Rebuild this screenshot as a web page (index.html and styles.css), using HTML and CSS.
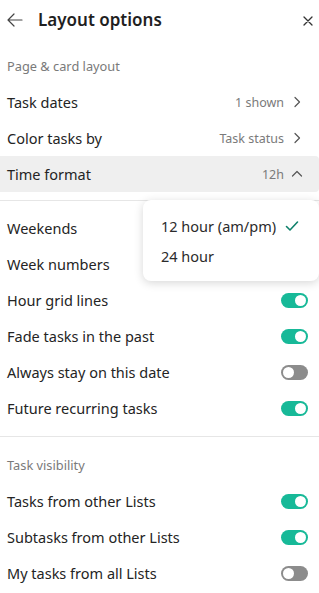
FILE: index.html
```html
<!DOCTYPE html>
<html lang="en">
<head>
<meta charset="utf-8">
<title>Layout options</title>
<link rel="stylesheet" href="styles.css">
</head>
<body>
<div class="panel">
  <header class="header">
    <svg class="back" width="16" height="14" viewBox="0 0 16 14"><path d="M15 7H1.5M7 1 1 7l6 6" fill="none" stroke="#444" stroke-width="1.2" stroke-linecap="round" stroke-linejoin="round"/></svg>
    <h1 class="title">Layout options</h1>
    <svg class="close" width="10" height="10" viewBox="0 0 10 10"><path d="M1 1l8 8M9 1 1 9" fill="none" stroke="#333" stroke-width="1.3" stroke-linecap="round"/></svg>
  </header>

  <div class="label first">Page &amp; card layout</div>
  <div class="row"><span class="name">Task dates</span><span class="value">1 shown</span><svg class="chev" width="12" height="12" viewBox="0 0 12 12"><path d="M4 1.5 8.5 6 4 10.5" fill="none" stroke="#555" stroke-width="1.2" stroke-linecap="round" stroke-linejoin="round"/></svg></div>
  <div class="row"><span class="name">Color tasks by</span><span class="value">Task status</span><svg class="chev" width="12" height="12" viewBox="0 0 12 12"><path d="M4 1.5 8.5 6 4 10.5" fill="none" stroke="#555" stroke-width="1.2" stroke-linecap="round" stroke-linejoin="round"/></svg></div>
  <div class="row active"><span class="name">Time format</span><span class="value">12h</span><svg class="chev" width="12" height="12" viewBox="0 0 12 12"><path d="M1.5 8 6 3.5 10.5 8" fill="none" stroke="#555" stroke-width="1.2" stroke-linecap="round" stroke-linejoin="round"/></svg></div>

  <div class="divider top"></div>

  <div class="row"><span class="name">Weekends</span></div>
  <div class="row"><span class="name">Week numbers</span></div>
  <div class="row"><span class="name">Hour grid lines</span><span class="toggle on"></span></div>
  <div class="row"><span class="name">Fade tasks in the past</span><span class="toggle on"></span></div>
  <div class="row"><span class="name">Always stay on this date</span><span class="toggle"></span></div>
  <div class="row"><span class="name">Future recurring tasks</span><span class="toggle on"></span></div>

  <div class="divider mid"></div>

  <div class="label second">Task visibility</div>
  <div class="row"><span class="name">Tasks from other Lists</span><span class="toggle on"></span></div>
  <div class="row"><span class="name">Subtasks from other Lists</span><span class="toggle on"></span></div>
  <div class="row"><span class="name">My tasks from all Lists</span><span class="toggle"></span></div>

  <div class="menu">
    <div class="item"><span>12 hour (am/pm)</span><svg class="check" width="14" height="12" viewBox="0 0 14 12"><path d="M1.5 6.5 5 10l7.5-8" fill="none" stroke="#0e806b" stroke-width="1.6" stroke-linecap="round" stroke-linejoin="round"/></svg></div>
    <div class="item"><span>24 hour</span></div>
  </div>
</div>
</body>
</html>
```

FILE: styles.css
```css
* { box-sizing: border-box; }
html, body { margin: 0; padding: 0; background: #fff; }
body {
  font-family: "Noto Sans", "Open Sans", sans-serif;
  color: #242424;
  width: 319px;
  overflow: hidden;
}
.panel { position: relative; width: 319px; }
.header {
  display: flex;
  align-items: center;
  height: 40px;
  padding: 0 0 0 7px;
}
.back { flex: none; }
.title {
  margin: 0 0 0 15px;
  font-size: 17px;
  font-weight: 600;
  color: #1f1f1f;
  flex: 1;
  line-height: 20px;
}
.close { flex: none; margin-right: 6px; margin-top: 1px; }
.label {
  padding-left: 7px;
  font-size: 12.8px;
  line-height: 16px;
  color: #7a7a7a;
}
.label.first { padding-top: 18px; padding-bottom: 10px; }
.label.second { padding-top: 20px; padding-bottom: 10px; }
.row {
  display: flex;
  align-items: center;
  height: 36px;
  padding: 0 11px 0 7px;
  font-size: 14.5px;
}
.row.active { background: #efefef; border-radius: 0 4px 4px 0; }
.name { flex: 1; white-space: nowrap; }
.value { font-size: 12.5px; color: #7a7a7a; margin-right: 7px; }
.chev { flex: none; margin-right: 5px; }
.divider { height: 1px; background: #e6e6e6; }
.divider.top { margin: 8px 0 9px; }
.divider.mid { margin: 10px 0 0; }
.toggle {
  position: relative;
  width: 27px;
  height: 15px;
  border-radius: 8px;
  background: #8c8c8c;
  flex: none;
}
.toggle::after {
  content: "";
  position: absolute;
  top: 2px;
  left: 2px;
  width: 11px;
  height: 11px;
  border-radius: 50%;
  background: #fff;
}
.toggle.on { background: #17b998; }
.toggle.on::after { left: 14px; }
.menu {
  position: absolute;
  left: 143px;
  top: 200px;
  width: 176px;
  height: 81px;
  background: #fff;
  border-radius: 8px;
  box-shadow: 0 2px 10px rgba(0,0,0,0.16);
  padding: 11px 0 10px 18px;
}
.item {
  display: flex;
  align-items: center;
  height: 30px;
  font-size: 14.5px;
  color: #2b2b2b;
}
.check { margin-left: 9px; }
```
